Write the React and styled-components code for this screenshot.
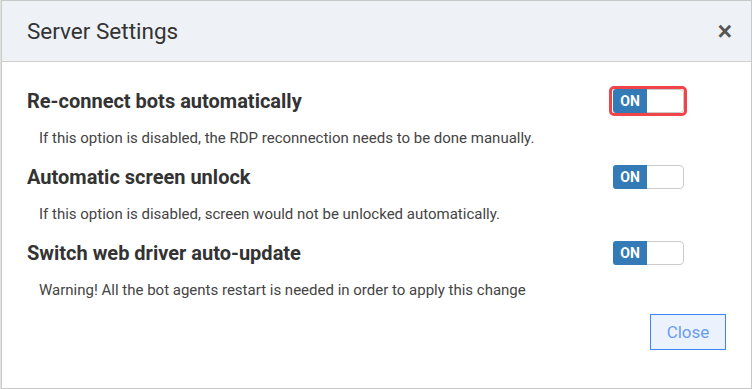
import styled, {createGlobalStyle} from 'styled-components';

const GlobalStyle = createGlobalStyle`
  body {
    margin: 0;
    background: #dfe5df;
    font-family: Roboto, "Liberation Sans", Arial, sans-serif;
  }
`;

const Modal = styled.div`
  box-sizing: border-box;
  margin-left: 1px;
  width: 751px;
  height: 389px;
  background: #fff;
  border: 1px solid #c8c8c8;
  display: flex;
  flex-direction: column;
`;

const Header = styled.div`
  height: 60px;
  background: #eef1f6;
  border-bottom: 1px solid #cfcfcf;
  display: flex;
  align-items: center;
  justify-content: space-between;
  padding: 0 19px 0 25px;
`;

const Title = styled.h2`
  margin: 0;
  font-size: 22.5px;
  font-weight: 400;
  color: #333;
`;

const CloseX = styled.button`
  border: none;
  background: none;
  padding: 0;
  font-size: 25px;
  font-weight: 700;
  color: #555;
  line-height: 1;
  cursor: pointer;
`;

const Body = styled.div`
  padding: 27px 25px 0 25px;
  display: flex;
  flex-direction: column;
`;

const Setting = styled.div`
  margin-bottom: 16.5px;
`;

const SettingHead = styled.div`
  display: flex;
  align-items: center;
  justify-content: space-between;
  padding-right: 42px;
  height: 24px;
`;

const SettingTitle = styled.div`
  font-size: 20px;
  font-weight: 700;
  color: #333;
`;

const SettingDesc = styled.div`
  margin-top: 13.5px;
  padding-left: 12px;
  font-size: 15px;
  line-height: 22px;
  color: #444;
`;

const Toggle = styled.div`
  position: relative;
  box-sizing: border-box;
  width: 71px;
  height: 24px;
  border: 1px solid #ccc;
  border-radius: 4px;
  display: flex;
  &::after {
    content: '';
    display: ${p => (p.$focused ? 'block' : 'none')};
    position: absolute;
    left: -5px;
    top: -4px;
    right: -4px;
    bottom: -4px;
    border: 3px solid #f04448;
    border-radius: 5px;
  }
`;

const OnPart = styled.span`
  width: 34px;
  background: #337ab7;
  color: #fff;
  font-size: 14px;
  font-weight: 700;
  display: flex;
  align-items: center;
  justify-content: center;
  border-radius: 3px 0 0 3px;
  margin: -1px 0 -1px -1px;
`;

const Footer = styled.div`
  display: flex;
  justify-content: flex-end;
  padding: 0 25px;
  margin-top: -3px;
`;

const CloseButton = styled.button`
  width: 76px;
  height: 36px;
  background: #ebf2fd;
  border: 1px solid #3d82f0;
  color: #6a9cef;
  font-family: Roboto, "Liberation Sans", Arial, sans-serif;
  font-size: 17px;
  cursor: pointer;
`;

const settings = [
  {
    title: 'Re-connect bots automatically',
    desc: 'If this option is disabled, the RDP reconnection needs to be done manually.',
    focused: true,
  },
  {
    title: 'Automatic screen unlock',
    desc: 'If this option is disabled, screen would not be unlocked automatically.',
  },
  {
    title: 'Switch web driver auto-update',
    desc: 'Warning! All the bot agents restart is needed in order to apply this change',
  },
];

export default function App() {
  return (
    <>
      <GlobalStyle />
      <Modal>
        <Header>
          <Title>Server Settings</Title>
          <CloseX>×</CloseX>
        </Header>
        <Body>
          {settings.map(s => (
            <Setting key={s.title}>
              <SettingHead>
                <SettingTitle>{s.title}</SettingTitle>
                <Toggle $focused={s.focused}>
                  <OnPart>ON</OnPart>
                </Toggle>
              </SettingHead>
              <SettingDesc>{s.desc}</SettingDesc>
            </Setting>
          ))}
        </Body>
        <Footer>
          <CloseButton>Close</CloseButton>
        </Footer>
      </Modal>
    </>
  );
}
